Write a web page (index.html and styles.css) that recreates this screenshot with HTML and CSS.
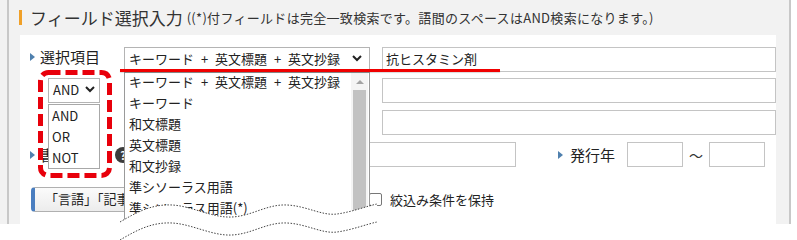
FILE: index.html
```html
<!DOCTYPE html>
<html lang="ja">
<head>
  <meta charset="UTF-8" />
  <meta name="viewport" content="width=device-width, initial-scale=1.0"/>
  <title>フィールド選択入力</title>
  <link rel="stylesheet" href="styles.css">
</head>
<body>
  <div class="screen">
    <div class="frame">
      <div class="page">
        <h2 class="section-title">
          <span class="title-main">フィールド選択入力</span>
          <span class="title-note">((*)付フィールドは完全一致検索です。語間のスペースはAND検索になります。)</span>
        </h2>

        <div class="panel">
          <div class="row">
            <div class="row-head row-head-label"><span class="label">選択項目</span></div>
            <div class="select field-select">
              <span class="combo">キーワード + 英文標題 + 英文抄録</span>
              <svg class="chevron" width="10" height="7" viewBox="0 0 10 7"><polyline points="1,1 5,5 9,1" /></svg>
              <!-- open list of the first select -->
              <div class="option-list field-options">
                <ul>
                  <li class="combo">キーワード + 英文標題 + 英文抄録</li>
                  <li>キーワード</li>
                  <li>和文標題</li>
                  <li>英文標題</li>
                  <li>和文抄録</li>
                  <li>準シソーラス用語</li>
                  <li>準シソーラス用語(*)</li>
                  <li>JSTシソーラス用語</li>
                </ul>
                <div class="scrollbar">
                  <span class="scroll-up"></span>
                  <span class="scroll-thumb"></span>
                </div>
              </div>
            </div>
            <input class="text-input" type="text" value="抗ヒスタミン剤" />
          </div>

          <div class="row">
            <div class="row-head">
              <div class="select op-select">
                <span>AND</span>
                <svg class="chevron" width="10" height="7" viewBox="0 0 10 7"><polyline points="1,1 5,5 9,1" /></svg>
                <ul class="option-list op-options">
                  <li>AND</li>
                  <li>OR</li>
                  <li>NOT</li>
                </ul>
              </div>
            </div>
            <div class="select field-select">
              <span>キーワード</span>
              <svg class="chevron" width="10" height="7" viewBox="0 0 10 7"><polyline points="1,1 5,5 9,1" /></svg>
            </div>
            <input class="text-input" type="text" />
          </div>

          <div class="row">
            <div class="row-head">
              <div class="select op-select">
                <span>AND</span>
                <svg class="chevron" width="10" height="7" viewBox="0 0 10 7"><polyline points="1,1 5,5 9,1" /></svg>
              </div>
            </div>
            <div class="select field-select">
              <span>キーワード</span>
              <svg class="chevron" width="10" height="7" viewBox="0 0 10 7"><polyline points="1,1 5,5 9,1" /></svg>
            </div>
            <input class="text-input" type="text" />
          </div>

          <div class="row row-source">
            <span class="label label-source">書誌名</span>
            <span class="help-icon">?</span>
            <input class="text-input source-input" type="text" />
            <span class="label label-year">発行年</span>
            <input class="text-input year-input" type="text" />
            <span class="tilde">〜</span>
            <input class="text-input year-input" type="text" />
          </div>

          <div class="row row-options">
            <button class="filter-button" type="button">「言語」「記事種類」で絞込み</button>
            <label class="keep"><span class="checkbox"></span>絞込み条件を保持</label>
          </div>
        </div>
      </div>
    </div>

    <!-- annotations drawn over the screenshot -->
    <div class="mark-line"></div>
    <svg class="mark-box" width="74" height="108" viewBox="0 0 74 108">
      <rect x="2.5" y="2.5" width="69" height="103" rx="8" ry="8" />
    </svg>
    <svg class="torn" width="262" height="48" viewBox="0 0 262 48">
      <path class="torn-fill" d="M3,30 C20,20 35,12 55,13 S95,26 115,25 S150,12 170,13 S205,24 220,22 S250,14 260,12 L262,48 L0,48 Z" />
      <path class="torn-edge" d="M3,30 C20,20 35,12 55,13 S95,26 115,25 S150,12 170,13 S205,24 220,22 S250,14 260,12" />
      <path class="torn-edge" d="M3,48 C20,38 35,30 55,31 S95,44 115,43 S150,30 170,31 S205,42 220,40 S250,32 260,30" />
    </svg>
  </div>
</body>
</html>
```

FILE: styles.css
```css
* {
  box-sizing: border-box;
}

body {
  margin: 0;
  background-color: #fff;
  font-family: "Noto Sans CJK JP", "Noto Sans", sans-serif;
  color: #333;
  overflow: hidden;
}

.screen {
  position: relative;
  width: 797px;
  height: 240px;
}

.frame {
  width: 791px;
  height: 224px;
  padding-left: 7px;
  background-color: #f2f2f2;
}

.page {
  height: 100%;
  padding-left: 11px;
  border-left: 2px solid #c8c8c8;
  border-right: 2px solid #c8c8c8;
}

.section-title {
  display: flex;
  align-items: center;
  height: 35px;
  margin: 0 0 0 -1px;
  font-weight: normal;
  white-space: nowrap;
}

.section-title::before {
  content: "";
  width: 3px;
  height: 15px;
  margin-right: 8px;
  background-color: #f0a028;
}

.title-main {
  font-size: 17px;
  color: #333;
}

.title-note {
  margin-left: 4px;
  font-size: 13px;
  letter-spacing: 0.3px;
  color: #333;
}

.panel {
  display: flex;
  flex-direction: column;
  gap: 7px;
  width: 756px;
  height: 189px;
  padding: 11px 0 0 10px;
  background-color: #fff;
}

.row {
  display: grid;
  grid-template-columns: 82px 246px 1fr;
  column-gap: 12px;
  height: 25px;
  align-items: center;
}

.row-head-label {
  display: flex;
  align-items: center;
  height: 100%;
  padding-bottom: 5px;
}

.label {
  display: inline-flex;
  align-items: center;
  font-size: 15px;
  color: #222;
  white-space: nowrap;
}

.label::before {
  content: "";
  margin-right: 5px;
  border-left: 5px solid #4f80ae;
  border-top: 4px solid transparent;
  border-bottom: 4px solid transparent;
}

.select {
  position: relative;
  display: flex;
  align-items: center;
  justify-content: space-between;
  height: 25px;
  padding: 0 7px 2px 4px;
  border: 1px solid #b4b4b4;
  background-color: #fff;
  font-size: 13px;
  color: #222;
  white-space: nowrap;
}

.combo {
  word-spacing: 4px;
}

.chevron polyline {
  fill: none;
  stroke: #222;
  stroke-width: 2;
}

.op-select {
  width: 52px;
  margin-left: 18px;
  padding-right: 4px;
}

.text-input {
  height: 25px;
  padding: 0 3px 2px;
  border: 1px solid #c4c4c4;
  font-family: inherit;
  font-size: 13px;
  color: #222;
  outline: none;
}

.option-list {
  position: absolute;
  z-index: 5;
  left: -1px;
  top: 24px;
  margin: 0;
  padding: 0;
  list-style: none;
  border: 1px solid #9a9a9a;
  background-color: #fff;
}

.option-list ul {
  margin: 0;
  padding: 0;
  list-style: none;
}

.option-list li {
  height: 21px;
  line-height: 21px;
  font-size: 13px;
  color: #222;
}

.field-options {
  display: flex;
  width: 246px;
  height: 160px;
  overflow: hidden;
}

.field-options ul {
  flex: 1;
  margin-top: -2px;
  padding-left: 4px;
}

.scrollbar {
  display: flex;
  flex-direction: column;
  align-items: center;
  width: 17px;
  margin-right: 1px;
  padding-top: 7px;
  background-color: #f4f4f4;
}

.scroll-up {
  border-bottom: 4px solid #a3a3a3;
  border-left: 4px solid transparent;
  border-right: 4px solid transparent;
}

.scroll-thumb {
  flex: 1;
  width: 13px;
  margin-top: 6px;
  background-color: #c2c2c2;
}

.op-options {
  top: 25px;
  width: 52px;
  height: 65px;
  padding: 0 0 0 3px;
  border-color: #a8a8a8;
}

.row-source {
  display: flex;
  column-gap: 0;
}

.label-source {
  width: 85px;
  overflow: hidden;
}

.help-icon {
  display: flex;
  align-items: center;
  justify-content: center;
  width: 16px;
  height: 16px;
  border-radius: 50%;
  background-color: #3c3c3c;
  color: #fff;
  font-size: 11px;
  font-weight: bold;
}

.source-input {
  width: 382px;
  margin-left: 3px;
}

.label-year {
  margin-left: 42px;
  width: 69px;
}

.label-year::before {
  margin-right: 7px;
}

.year-input {
  width: 56px;
}

.tilde {
  width: 26px;
  text-align: center;
  font-size: 14px;
  color: #333;
}

.row-options {
  display: flex;
  column-gap: 0;
  margin-top: 13px;
}

.filter-button {
  width: 330px;
  height: 25px;
  margin-left: 1px;
  padding: 0 0 2px 10px;
  text-align: left;
  border: 1px solid #b0b0b0;
  border-left: 4px solid #4a7ec0;
  border-radius: 4px;
  background: linear-gradient(#fbfbfb, #ececec);
  font-family: inherit;
  font-size: 13px;
  color: #222;
  white-space: nowrap;
  overflow: hidden;
}

.keep {
  display: flex;
  align-items: center;
  margin-left: 8px;
  font-size: 13px;
  color: #222;
}

.checkbox {
  width: 13px;
  height: 13px;
  margin-right: 8px;
  border: 1px solid #777;
  border-radius: 2px;
  background-color: #fff;
}

.mark-line,
.mark-box,
.torn {
  position: absolute;
  z-index: 10;
}

.mark-line {
  left: 120px;
  top: 69px;
  width: 380px;
  height: 3px;
  background-color: #f00000;
  box-shadow: 0 1px 1px rgba(0, 0, 0, 0.15);
}

.mark-box {
  left: 38px;
  top: 70px;
}

.mark-box rect {
  fill: none;
  stroke: #e8000b;
  stroke-width: 5;
  stroke-dasharray: 12 5;
}

.torn {
  left: 117px;
  top: 192px;
}

.torn-fill {
  fill: #fff;
}

.torn-edge {
  fill: none;
  stroke: #444;
  stroke-width: 1;
  stroke-dasharray: 1.5 1.5;
}
```
